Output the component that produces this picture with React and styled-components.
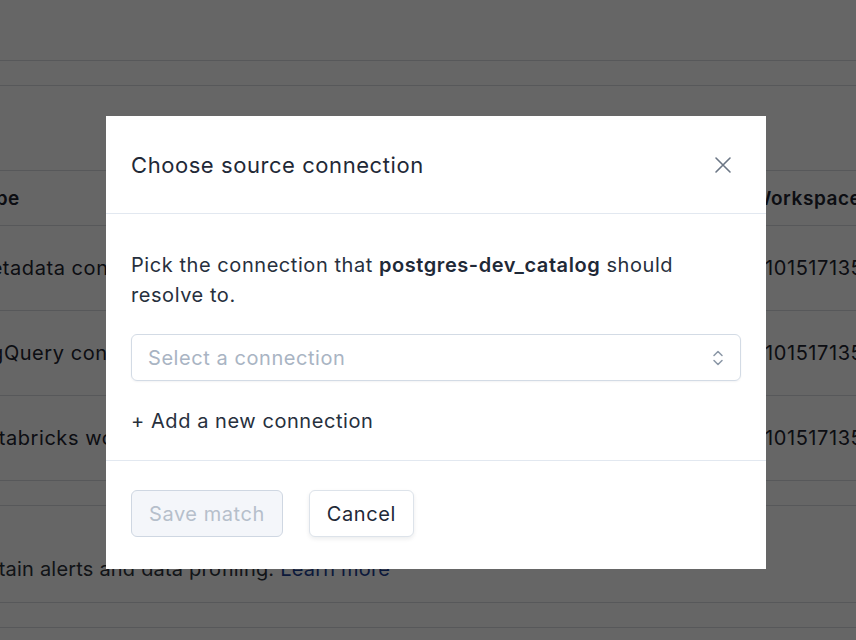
import styled, { createGlobalStyle } from "styled-components";

const GlobalStyle = createGlobalStyle`
  html, body {
    margin: 0;
    padding: 0;
    background: #ffffff;
    overflow: hidden;
  }
  body {
    font-family: Inter, "Noto Sans", "Liberation Sans", sans-serif;
    letter-spacing: 0.035em;
    color: #1e293b;
  }
`;

const Page = styled.div`
  width: 856px;
  height: 640px;
  position: relative;
  overflow: hidden;
  background: #ffffff;
`;

const PageContent = styled.div`
  margin-left: -28px;
  width: 1200px;
`;

const Rule = styled.div`
  height: 1px;
  background: #dadde2;
  margin-top: ${(p) => p.$gap || 0}px;
`;

const Table = styled.div`
  margin-top: 84px;
  border-top: 1px solid #dadde2;
`;

const TableRow = styled.div`
  display: grid;
  grid-template-columns: 780px 1fr;
  align-items: center;
  box-sizing: border-box;
  height: ${(p) => (p.$head ? 55 : 85)}px;
  border-bottom: 1px solid #dadde2;
  font-size: ${(p) => (p.$head ? 19 : 20)}px;
  font-weight: ${(p) => (p.$head ? 600 : 400)};
  color: #1e2530;
`;

const Footnote = styled.p`
  margin: 48px 0 0 -20px;
  font-size: 20px;
  color: #2d333b;
  line-height: 30px;
  letter-spacing: 0.01em;

  a {
    color: #1d3f94;
    text-decoration: none;
  }
`;

const Overlay = styled.div`
  position: absolute;
  inset: 0;
  background: rgba(0, 0, 0, 0.6);
  display: flex;
  align-items: flex-start;
  padding: 116px 0 0 106px;
  box-sizing: border-box;
`;

const Modal = styled.div`
  width: 660px;
  background: #ffffff;
  display: flex;
  flex-direction: column;
`;

const Header = styled.div`
  display: flex;
  align-items: center;
  justify-content: space-between;
  height: 98px;
  box-sizing: border-box;
  padding: 0 32px 0 25px;
  border-bottom: 1px solid #e2e8f0;
`;

const Title = styled.h2`
  margin: 0;
  font-size: 22px;
  font-weight: 400;
  color: #1f2937;
`;

const CloseButton = styled.button`
  border: 0;
  background: none;
  padding: 0;
  width: 22px;
  height: 22px;
  display: flex;
  align-items: center;
  justify-content: center;
  color: #6b7685;
  cursor: pointer;
`;

const Body = styled.div`
  padding: 36px 25px 24px;
  border-bottom: 1px solid #e2e8f0;
`;

const Prompt = styled.p`
  margin: 0;
  font-size: 20px;
  line-height: 30px;
  color: #27303d;

  strong {
    font-weight: 600;
    color: #1f2937;
  }
`;

const Select = styled.div`
  margin-top: 24px;
  height: 47px;
  box-sizing: border-box;
  border: 1px solid #d3dbe5;
  border-radius: 6px;
  box-shadow: 0 1px 2px rgba(15, 23, 42, 0.05);
  display: flex;
  align-items: center;
  justify-content: space-between;
  padding: 0 15px 0 16px;
  font-size: 20px;
  color: #a9b4c3;
`;

const AddLink = styled.div`
  margin-top: 25px;
  font-size: 20px;
  line-height: 30px;
  color: #27303d;
`;

const Footer = styled.div`
  display: flex;
  gap: 26px;
  padding: 29px 25px 32px;
`;

const Button = styled.button`
  height: 47px;
  padding: 0 17px;
  border-radius: 6px;
  font-family: inherit;
  letter-spacing: inherit;
  font-size: 20px;
  font-weight: 400;
  box-sizing: border-box;
  border: 1px solid ${(p) => (p.disabled ? "#cfd7e2" : "#dde3ea")};
  background: ${(p) => (p.disabled ? "#f4f6fa" : "#ffffff")};
  color: ${(p) => (p.disabled ? "#b6bfcb" : "#1f2937")};
  box-shadow: ${(p) => (p.disabled ? "none" : "0 2px 4px rgba(15, 23, 42, 0.08)")};
`;

const rows = [
  ["Metadata connection", "4101517135"],
  ["BigQuery connection", "4101517135"],
  ["Databricks workspace", "4101517135"],
];

export default function App() {
  return (
    <Page>
      <GlobalStyle />
      <PageContent>
        <Rule $gap={60} />
        <Rule $gap={24} />
        <Table>
          <TableRow $head>
            <span>Type</span>
            <span>Workspace</span>
          </TableRow>
          {rows.map(([type, ws]) => (
            <TableRow key={type}>
              <span>{type}</span>
              <span>{ws}</span>
            </TableRow>
          ))}
        </Table>
        <Rule $gap={24} />
        <Footnote>
          Maintain alerts and data profiling. <a href="#">Learn more</a>
        </Footnote>
        <Rule $gap={18} />
        <Rule $gap={24} />
      </PageContent>

      <Overlay>
        <Modal>
          <Header>
            <Title>Choose source connection</Title>
            <CloseButton aria-label="Close">
              <svg width="18" height="18" viewBox="0 0 18 18" fill="none" stroke="currentColor" strokeWidth="1.6" strokeLinecap="round">
                <path d="M2 2 L16 16 M16 2 L2 16" />
              </svg>
            </CloseButton>
          </Header>
          <Body>
            <Prompt>
              Pick the connection that <strong>postgres-dev_catalog</strong> should resolve to.
            </Prompt>
            <Select>
              <span>Select a connection</span>
              <svg width="14" height="20" viewBox="0 0 14 20" fill="none" stroke="#8a96a6" strokeWidth="1.5" strokeLinecap="round" strokeLinejoin="round">
                <path d="M3 7.5 L7 3.5 L11 7.5" />
                <path d="M3 12.5 L7 16.5 L11 12.5" />
              </svg>
            </Select>
            <AddLink>+ Add a new connection</AddLink>
          </Body>
          <Footer>
            <Button disabled>Save match</Button>
            <Button>Cancel</Button>
          </Footer>
        </Modal>
      </Overlay>
    </Page>
  );
}
